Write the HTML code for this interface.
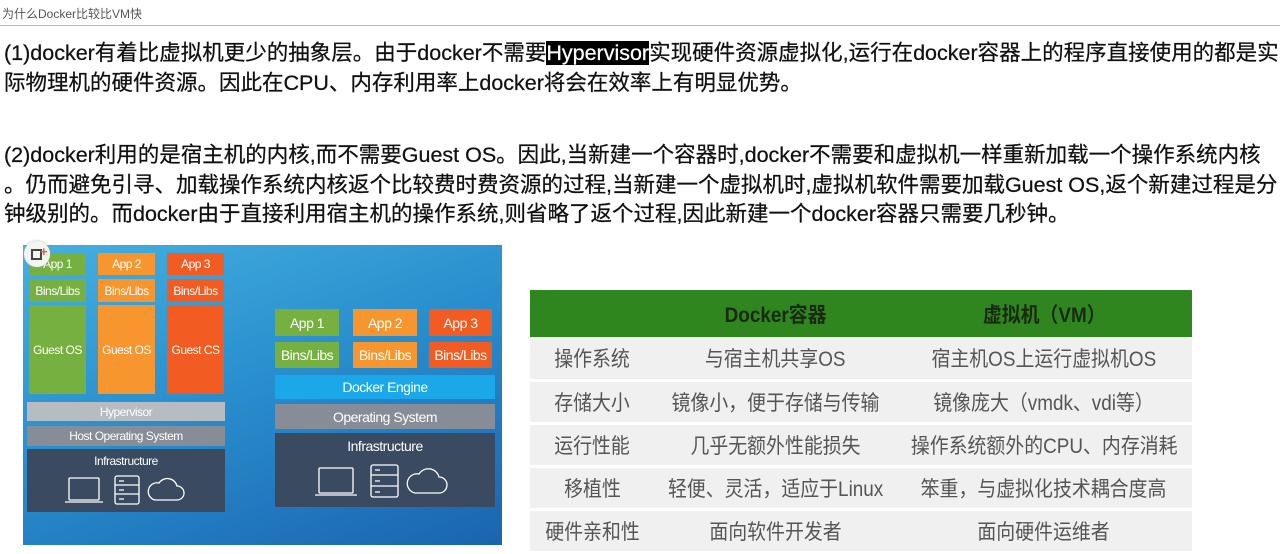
<!DOCTYPE html>
<html><head><meta charset="utf-8"><style>
*{margin:0;padding:0;box-sizing:border-box}
body{width:1280px;height:548px;background:#fff;position:relative;overflow:hidden;font-family:"Liberation Sans","Noto Sans CJK SC",sans-serif}
.t{position:absolute;left:2px;top:5px;font-size:12px;color:#555}
.hr{position:absolute;left:0;top:25px;width:1280px;height:1px;background:#bbb}
.l{position:absolute;left:4px;font-size:21.5px;color:#111;white-space:nowrap;line-height:24px;-webkit-text-stroke:0.25px #111}
.hl{background:#000;color:#fff;-webkit-text-stroke:0.25px #fff}
.a{position:absolute;color:#fff;font-size:12px;display:flex;align-items:center;justify-content:center;letter-spacing:-0.5px}
.g{background:#76b041}.o{background:#f7962f}.r{background:#f25c22}
table{position:absolute;left:530px;top:290px;width:662px;border-collapse:collapse;font-size:21px;color:#555}
td{text-align:center;height:43px;background:#f0f0f0;border-bottom:3px solid #fff;white-space:nowrap;padding:0}
td span,th span{display:inline-block;transform:scaleX(0.9)}
th{background:#2f861f;height:47px;color:#1a2a10;font-weight:bold;font-size:21px}
</style></head><body>
<div class="t">为什么Docker比较比VM快</div>
<div class="hr"></div>
<div class="l" style="top:41px">(1)docker有着比虚拟机更少的抽象层。由于docker不需要<span class="hl">Hypervisor</span>实现硬件资源虚拟化,运行在docker容器上的程序直接使用的都是实</div>
<div class="l" style="top:71px">际物理机的硬件资源。因此在CPU、内存利用率上docker将会在效率上有明显优势。</div>
<div class="l" style="top:143px">(2)docker利用的是宿主机的内核,而不需要Guest OS。因此,当新建一个容器时,docker不需要和虚拟机一样重新加载一个操作系统内核</div>
<div class="l" style="top:173px">。仍而避免引寻、加载操作系统内核返个比较费时费资源的过程,当新建一个虚拟机时,虚拟机软件需要加载Guest OS,返个新建过程是分</div>
<div class="l" style="top:202px">钟级别的。而docker由于直接利用宿主机的操作系统,则省略了返个过程,因此新建一个docker容器只需要几秒钟。</div>

<div style="position:absolute;left:23px;top:245px;width:479px;height:300px;background:linear-gradient(160deg,#45b0e0 0%,#2a8fce 45%,#1a64b0 100%)"></div>
<div class="a g" style="left:29px;top:253px;width:57px;height:22px">App 1</div>
<div class="a o" style="left:98px;top:253px;width:57px;height:22px">App 2</div>
<div class="a r" style="left:167px;top:253px;width:57px;height:22px">App 3</div>
<div class="a g" style="left:29px;top:279px;width:57px;height:23px">Bins/Libs</div>
<div class="a o" style="left:98px;top:279px;width:57px;height:23px">Bins/Libs</div>
<div class="a r" style="left:167px;top:279px;width:57px;height:23px">Bins/Libs</div>
<div class="a g" style="left:29px;top:305px;width:57px;height:89px">Guest OS</div>
<div class="a o" style="left:98px;top:305px;width:57px;height:89px">Guest OS</div>
<div class="a r" style="left:167px;top:305px;width:57px;height:89px">Guest CS</div>
<div class="a" style="left:27px;top:402px;width:198px;height:19px;background:#b7bcc2">Hypervisor</div>
<div class="a" style="left:27px;top:426px;width:198px;height:20px;background:#868d96">Host Operating System</div>
<div class="a" style="left:27px;top:449px;width:198px;height:63px;background:#3a4a60;align-items:flex-start;padding-top:5px">Infrastructure</div>
<svg style="position:absolute;left:27px;top:470px" width="198" height="40" fill="none" stroke="#fff" stroke-width="1.3">
<rect x="42" y="8" width="30" height="22" rx="1"/><path d="M38 32h38"/>
<rect x="88" y="6" width="24" height="28" rx="2"/><path d="M88 15h24M88 24h24M92 11h5M92 20h5M92 29h5"/>
<path d="M128 30h22a7 7 0 0 0 0-14a10 10 0 0 0-18-3a8 8 0 0 0-4 17z"/>
</svg>

<div class="a g" style="left:275px;top:309px;width:64px;height:27px;font-size:14px">App 1</div>
<div class="a o" style="left:353px;top:309px;width:64px;height:27px;font-size:14px">App 2</div>
<div class="a r" style="left:429px;top:309px;width:63px;height:27px;font-size:14px">App 3</div>
<div class="a g" style="left:275px;top:342px;width:64px;height:26px;font-size:14px">Bins/Libs</div>
<div class="a o" style="left:353px;top:342px;width:64px;height:26px;font-size:14px">Bins/Libs</div>
<div class="a r" style="left:429px;top:342px;width:63px;height:26px;font-size:14px">Bins/Libs</div>
<div class="a" style="left:275px;top:375px;width:220px;height:24px;background:#1ba8e8;font-size:14px">Docker Engine</div>
<div class="a" style="left:275px;top:404px;width:220px;height:25px;background:#868d96;font-size:14px">Operating System</div>
<div class="a" style="left:275px;top:433px;width:220px;height:74px;background:#3a4a60;align-items:flex-start;padding-top:5px;font-size:14px">Infrastructure</div>
<svg style="position:absolute;left:275px;top:460px" width="220" height="45" fill="none" stroke="#fff" stroke-width="1.3">
<rect x="44" y="8" width="34" height="25" rx="1"/><path d="M40 35h42"/>
<rect x="96" y="5" width="27" height="32" rx="2"/><path d="M96 15h27M96 26h27M100 10h5M100 21h5M100 32h5"/>
<path d="M140 33h24a8 8 0 0 0 0-16a11 11 0 0 0-20-3a9 9 0 0 0-4 19z"/>
</svg>
<div style="position:absolute;left:24px;top:241px;width:26px;height:26px;border-radius:50%;background:#f4f4f4;box-shadow:0 0 2px #aaa"></div>
<div style="position:absolute;left:31px;top:249px;width:11px;height:11px;border:2px solid #444"></div>
<div style="position:absolute;left:40px;top:244px;color:#f25c22;font-size:13px;font-weight:bold">+</div>

<table>
<tr><th style="width:134px"></th><th style="width:242px"><span>Docker容器</span></th><th><span>虚拟机（VM）</span></th></tr>
<tr><td><span>操作系统</span></td><td><span>与宿主机共享OS</span></td><td><span>宿主机OS上运行虚拟机OS</span></td></tr>
<tr><td><span>存储大小</span></td><td><span>镜像小，便于存储与传输</span></td><td><span>镜像庞大（vmdk、vdi等）</span></td></tr>
<tr><td><span>运行性能</span></td><td><span>几乎无额外性能损失</span></td><td><span>操作系统额外的CPU、内存消耗</span></td></tr>
<tr><td><span>移植性</span></td><td><span>轻便、灵活，适应于Linux</span></td><td><span>笨重，与虚拟化技术耦合度高</span></td></tr>
<tr><td><span>硬件亲和性</span></td><td><span>面向软件开发者</span></td><td><span>面向硬件运维者</span></td></tr>
</table>
</body></html>
